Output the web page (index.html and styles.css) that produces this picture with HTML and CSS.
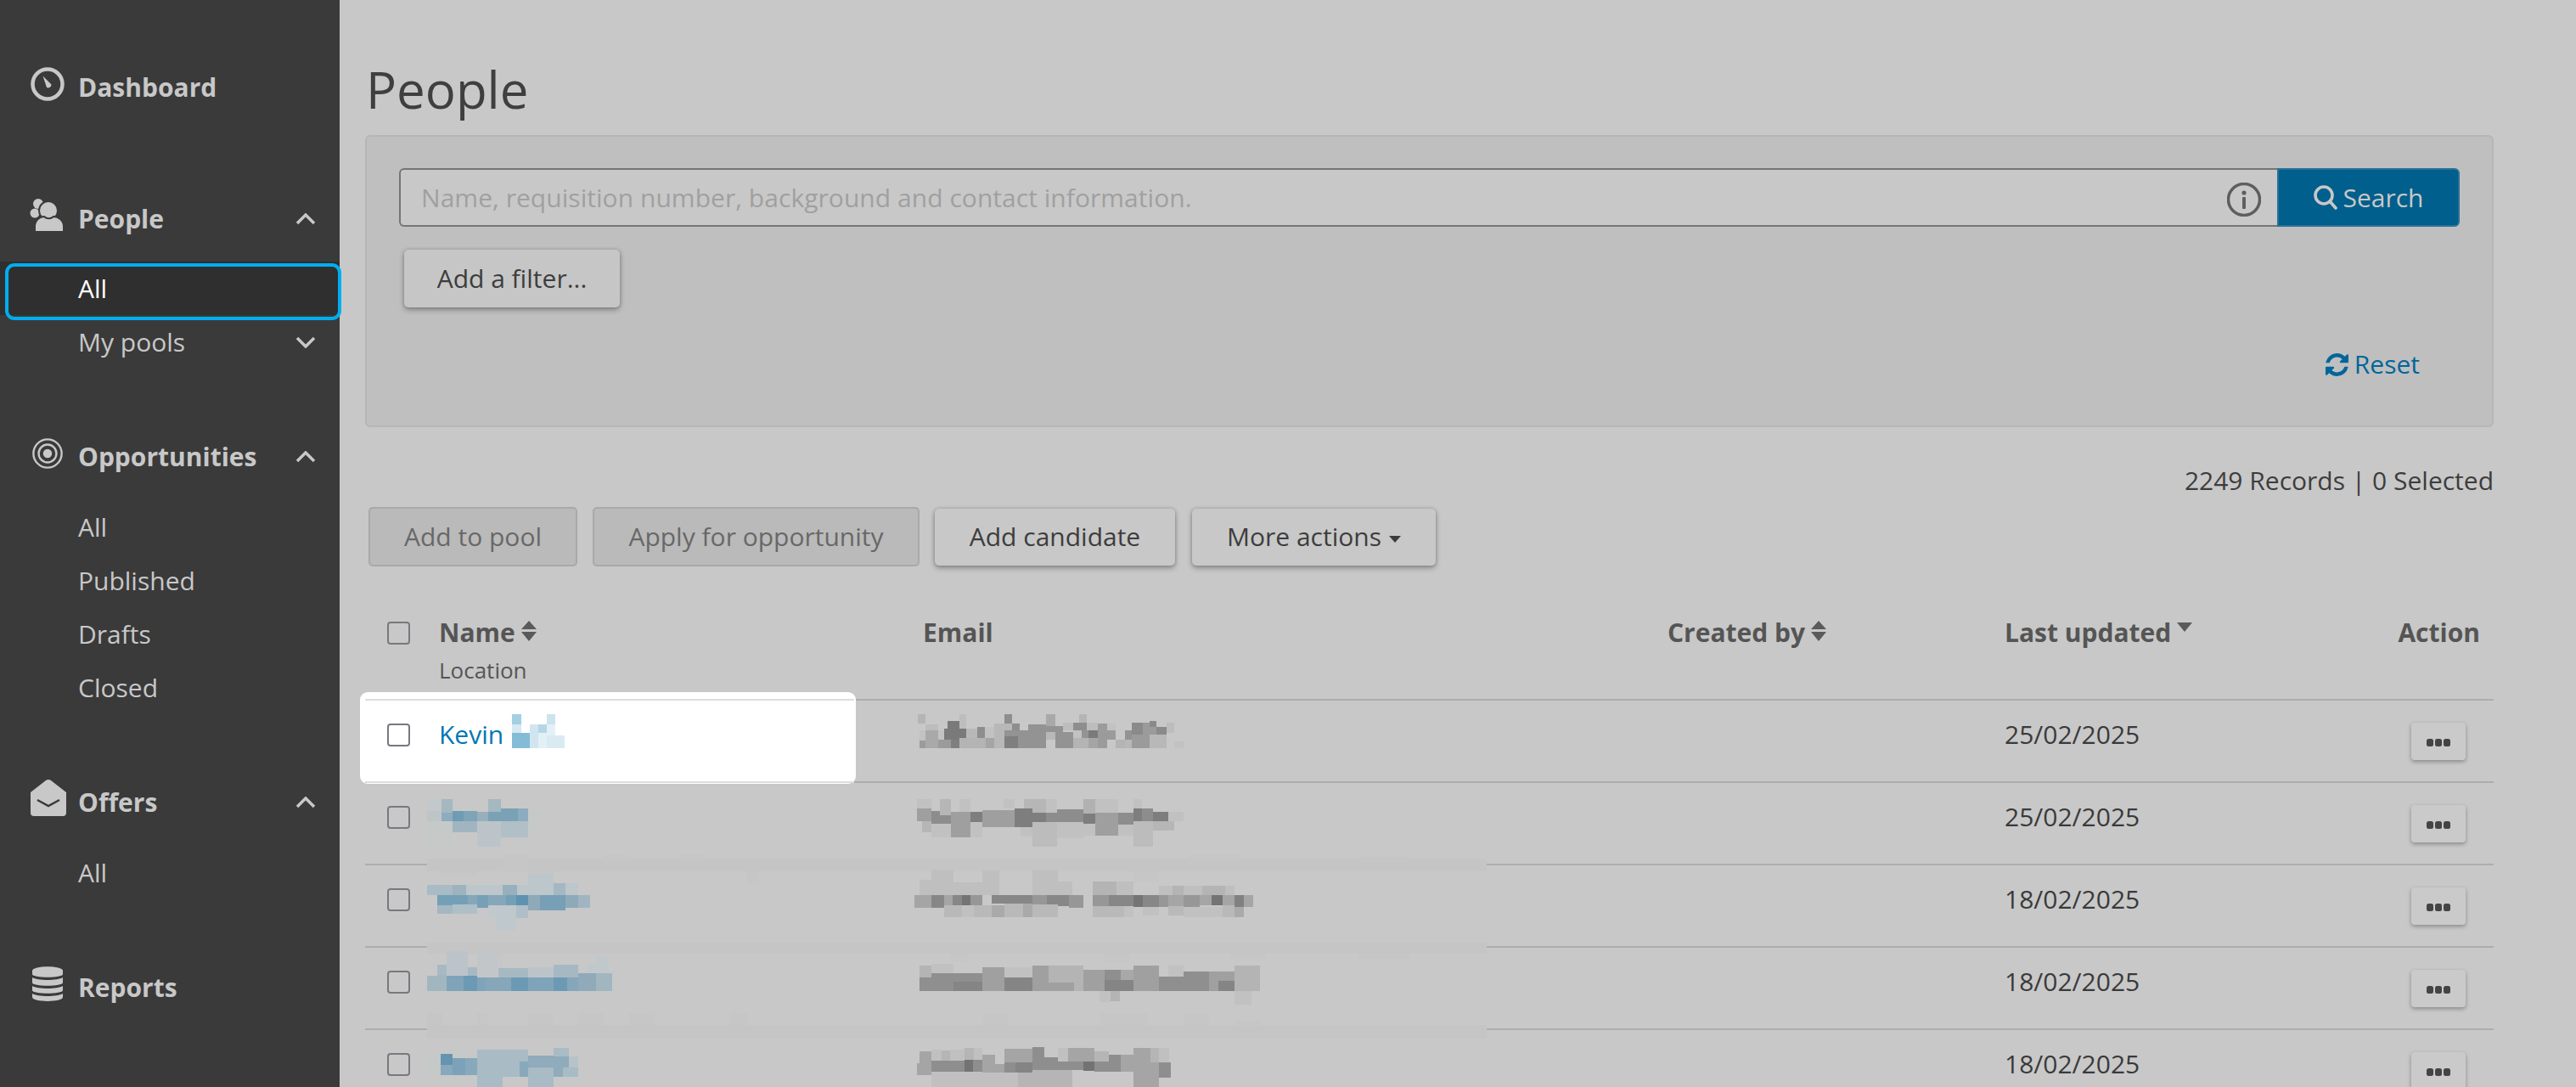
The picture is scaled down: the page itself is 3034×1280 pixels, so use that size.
FILE: index.html
```html
<!DOCTYPE html>
<html lang="en">
<head>
<meta charset="utf-8">
<title>People</title>
<link rel="stylesheet" href="styles.css">
</head>
<body>
<div class="app">
  <nav class="sidebar">
    <section class="group group-solo">
      <a class="head">
        <svg class="icon icon-dash" viewBox="0 0 40 40"><circle cx="20" cy="20" r="17.500" fill="none" stroke="currentColor" stroke-width="4.500"/><path fill="currentColor" d="M14.500 10.500 L24.500 20.500 A3.800 3.800 0 0 1 19 24 Z"/></svg>
        <span class="label">Dashboard</span>
      </a>
    </section>
    <section class="group">
      <a class="head">
        <svg class="icon icon-people" viewBox="0 0 40 44"><circle cx="10" cy="9" r="6" fill="currentColor"/><circle cx="6" cy="20" r="5.500" fill="currentColor"/><circle cx="22" cy="17" r="11" fill="currentColor" stroke="#3a3a3a" stroke-width="2"/><path fill="currentColor" stroke="#3a3a3a" stroke-width="2" d="M6 42 V36 C6 28 12 24 17 24 C20 27 25 27 28 24 C34 24 40 29 40 36 V42 Z"/></svg>
        <span class="label">People</span>
        <svg class="chevron" viewBox="0 0 24 14"><path d="M2 12 L12 2 L22 12"/></svg>
      </a>
      <a class="sub active">All</a>
      <a class="sub">My pools<svg class="chevron" viewBox="0 0 24 14"><path d="M2 2 L12 12 L22 2"/></svg></a>
    </section>
    <section class="group">
      <a class="head">
        <svg class="icon icon-target" viewBox="0 0 40 40"><circle cx="20" cy="20" r="17.500" fill="none" stroke="currentColor" stroke-width="2.500"/><circle cx="20" cy="20" r="11" fill="none" stroke="currentColor" stroke-width="2.500"/><circle cx="20" cy="20" r="5.500" fill="currentColor"/></svg>
        <span class="label">Opportunities</span>
        <svg class="chevron" viewBox="0 0 24 14"><path d="M2 12 L12 2 L22 12"/></svg>
      </a>
      <a class="sub">All</a>
      <a class="sub">Published</a>
      <a class="sub">Drafts</a>
      <a class="sub">Closed</a>
    </section>
    <section class="group">
      <a class="head">
        <svg class="icon icon-offer" viewBox="0 0 42 43"><path fill="currentColor" d="M21 0 Q22.500 0 24 1 L42 15 V39 Q42 43 38 43 H4 Q0 43 0 39 V15 L18 1 Q19.500 0 21 0 Z"/><path fill="none" stroke="#3a3a3a" stroke-width="2.500" d="M8 24 L21 31 L34 24"/></svg>
        <span class="label">Offers</span>
        <svg class="chevron" viewBox="0 0 24 14"><path d="M2 12 L12 2 L22 12"/></svg>
      </a>
      <a class="sub">All</a>
    </section>
    <section class="group">
      <a class="head">
        <svg class="icon icon-db" viewBox="0 0 36 41"><path fill="currentColor" d="M0 5 C0 -1.500 36 -1.500 36 5 V9 C36 14 0 14 0 9 Z"/><path fill="currentColor" d="M0 13 C6 17 30 17 36 13 V19 C36 24 0 24 0 19 Z"/><path fill="currentColor" d="M0 23 C6 27 30 27 36 23 V28 C36 33 0 33 0 28 Z"/><path fill="currentColor" d="M0 32 C6 36 30 36 36 32 V36 C36 42.500 0 42.500 0 36 Z"/></svg>
        <span class="label">Reports</span>
      </a>
    </section>
  </nav>

  <main class="main">
    <h1 class="title">People</h1>

    <section class="panel">
      <div class="search-row">
        <div class="search-field">
          <input class="search-input" type="text" placeholder="Name, requisition number, background and contact information.">
          <svg class="info" viewBox="0 0 40 40"><circle cx="20" cy="20" r="18.500" fill="none" stroke="currentColor" stroke-width="3.500"/><circle cx="20" cy="12" r="2.600" fill="currentColor"/><rect x="18" y="17" width="4" height="14" rx="1" fill="currentColor"/></svg>
        </div>
        <button class="search-btn" type="button">
          <svg class="search-icon" viewBox="0 0 28 30"><circle cx="12" cy="12" r="10" fill="none" stroke="currentColor" stroke-width="3.600"/><path d="M19 19 L26 27" stroke="currentColor" stroke-width="3.600" stroke-linecap="round"/></svg>
          Search
        </button>
      </div>
      <button class="btn btn-raised filter-btn" type="button">Add a filter...</button>
      <a class="reset">
        <svg class="reset-icon" viewBox="0 0 1536 1536"><path fill="currentColor" d="M1511 928q0 5-1 7-64 268-268 434.500t-478 166.500q-146 0-282.500-55t-243.500-157l-129 129q-19 19-45 19t-45-19-19-45v-448q0-26 19-45t45-19h448q26 0 45 19t19 45-19 45l-137 137q71 66 161 102t187 36q134 0 250-65t186-179q11-17 53-117 8-23 30-23h192q13 0 22.500 9.500t9.500 22.500zm25-800v448q0 26-19 45t-45 19h-448q-26 0-45-19t-19-45 19-45l138-138q-148-137-349-137-134 0-250 65t-186 179q-11 17-53 117-8 23-30 23h-199q-13 0-22.500-9.500t-9.500-22.500v-7q65-268 270-434.500t480-166.500q146 0 284 55.500t245 156.500l130-129q19-19 45-19t45 19 19 45z"/></svg>
        Reset
      </a>
    </section>

    <p class="records">2249 Records | 0 Selected</p>

    <div class="actions">
      <button class="btn btn-disabled btn-pool" type="button">Add to pool</button>
      <button class="btn btn-disabled btn-apply" type="button">Apply for opportunity</button>
      <button class="btn btn-raised btn-add" type="button">Add candidate</button>
      <button class="btn btn-raised btn-more" type="button">More actions<span class="caret"></span></button>
    </div>

    <div class="table">
      <div class="row head-row">
        <div class="cell cell-check"><input class="check" type="checkbox"></div>
        <div class="cell">
          <div class="th">Name<svg class="sort" viewBox="0 0 18 24"><path d="M9 0 L18 10 H0 Z M0 13 H18 L9 24 Z"/></svg></div>
          <div class="th-sub">Location</div>
        </div>
        <div class="cell"><div class="th">Email</div></div>
        <div class="cell"><div class="th">Created by<svg class="sort" viewBox="0 0 18 24"><path d="M9 0 L18 10 H0 Z M0 13 H18 L9 24 Z"/></svg></div></div>
        <div class="cell"><div class="th">Last updated<svg class="sort-down" viewBox="0 0 18 11"><path d="M0 0 H18 L9 11 Z"/></svg></div></div>
        <div class="cell cell-action"><div class="th">Action</div></div>
      </div>

      <div class="row data-row">
        <div class="spotlight"></div>
        <div class="cell cell-check"><input class="check" type="checkbox"></div>
        <div class="cell"><a class="person">Kevin</a></div>
        <div class="cell"></div>
        <div class="cell"></div>
        <div class="cell date">25/02/2025</div>
        <div class="cell cell-action"><button class="dots" type="button"><svg viewBox="0 0 28 9"><rect width="8" height="9" rx="2.500"/><rect x="10" width="8" height="9" rx="2.500"/><rect x="20" width="8" height="9" rx="2.500"/></svg></button></div>
      </div>
      <div class="row data-row">
        <div class="cell cell-check"><input class="check" type="checkbox"></div>
        <div class="cell"></div>
        <div class="cell"></div>
        <div class="cell"></div>
        <div class="cell date">25/02/2025</div>
        <div class="cell cell-action"><button class="dots" type="button"><svg viewBox="0 0 28 9"><rect width="8" height="9" rx="2.500"/><rect x="10" width="8" height="9" rx="2.500"/><rect x="20" width="8" height="9" rx="2.500"/></svg></button></div>
      </div>
      <div class="row data-row">
        <div class="cell cell-check"><input class="check" type="checkbox"></div>
        <div class="cell"></div>
        <div class="cell"></div>
        <div class="cell"></div>
        <div class="cell date">18/02/2025</div>
        <div class="cell cell-action"><button class="dots" type="button"><svg viewBox="0 0 28 9"><rect width="8" height="9" rx="2.500"/><rect x="10" width="8" height="9" rx="2.500"/><rect x="20" width="8" height="9" rx="2.500"/></svg></button></div>
      </div>
      <div class="row data-row">
        <div class="cell cell-check"><input class="check" type="checkbox"></div>
        <div class="cell"></div>
        <div class="cell"></div>
        <div class="cell"></div>
        <div class="cell date">18/02/2025</div>
        <div class="cell cell-action"><button class="dots" type="button"><svg viewBox="0 0 28 9"><rect width="8" height="9" rx="2.500"/><rect x="10" width="8" height="9" rx="2.500"/><rect x="20" width="8" height="9" rx="2.500"/></svg></button></div>
      </div>
      <div class="row data-row">
        <div class="cell cell-check"><input class="check" type="checkbox"></div>
        <div class="cell"></div>
        <div class="cell"></div>
        <div class="cell"></div>
        <div class="cell date">18/02/2025</div>
        <div class="cell cell-action"><button class="dots" type="button"><svg viewBox="0 0 28 9"><rect width="8" height="9" rx="2.500"/><rect x="10" width="8" height="9" rx="2.500"/><rect x="20" width="8" height="9" rx="2.500"/></svg></button></div>
      </div>

      <svg class="redactions" viewBox="430 715 1400 565" aria-hidden="true">
        <g fill="#c5c5c5">
          <path d="M503 1011h1248v15h-1248z"/>
          <path d="M503 1110h1248v13h-1248z"/>
          <path d="M503 1207h1248v16h-1248z"/>
        </g>
        <g fill="#c6c6c6">
          <path d="M520 1026h42v5h-42zM592 1007h30v18h-30zM622 1026h30v12h-30zM711 1007h30v6h-30zM800 1007h30v6h-30zM880 1026h14v14h-14zM1097 1026h20v20h-20zM1157 1026h20v20h-20zM1216 1026h30v16h-30zM1335 1026h30v12h-30zM1400 1007h60v6h-60zM1600 1009h60v6h-60z"/>
          <path d="M503 1193h18v14h-18zM562 1193h12v14h-12zM622 1193h30v14h-30zM681 1193h30v14h-30zM741 1193h30v14h-30zM860 1193h21v14h-21zM1157 1193h30v14h-30zM1295 1193h57v14h-57zM1394 1193h30v14h-30zM1455 1202h30v6h-30z"/>
          <path d="M562 1123h30v20h-30zM1120 1123h20v10h-20zM1300 1123h30v10h-30zM1450 1123h40v8h-40zM1600 1123h60v6h-60z"/>
        </g>

        <!-- row 1 -->
        <path fill="#a3cfe3" d="M603 841h11v12h-11z"/>
        <path fill="#d6e8f1" d="M603 853h11v10h-11z"/>
        <path fill="#84bcd8" d="M603 863h21v18h-21z"/>
        <path fill="#d0e5ef" d="M624 853h10v28h-10z"/>
        <path fill="#b5d6e7" d="M634 853h10v10h-10z"/>
        <path fill="#e3f0f6" d="M634 863h10v18h-10zM644 853h10v13h-10z"/>
        <path fill="#cde3ee" d="M644 841h10v12h-10z"/>
        <path fill="#daeaf2" d="M644 866h21v15h-21z"/>

        <g transform="translate(1060 820) scale(.33333)">
          <path fill="#b5b5b5" d="M63 63h27v33h-27zM633 63h27v30h-27z"/>
          <path fill="#bdbdbd" d="M90 99h45v21h-45zM210 63h24v51h-24zM576 93h36v27h-36zM942 93h27v36h-27zM660 93h39v27h-39z"/>
          <path fill="#7a7a7a" d="M168 87h42v27h-42zM156 114h78v39h-78zM666 120h33v27h-33z"/>
          <path fill="#8e8e8e" d="M369 63h27v33h-27zM273 108h27v39h-27zM396 96h27v24h-27zM612 93h48v27h-48z"/>
          <path fill="#a9a9a9" d="M516 63h33v42h-33zM90 120h45v33h-45zM90 153h45v30h-45z"/>
          <path fill="#c2c2c2" d="M69 120h21v36h-21zM135 120h21v33h-21zM300 108h33v39h-33zM612 120h30v27h-30zM732 96h30v24h-30zM969 159h36v24h-36z"/>
          <path fill="#b8b8b8" d="M234 114h39v33h-39zM333 96h36v87h-36zM369 96h27v24h-27zM516 126h33v27h-33zM795 153h24v30h-24zM882 135h60v48h-60z"/>
          <path fill="#939393" d="M369 120h48v21h-48zM417 120h36v63h-36zM453 99h63v84h-63zM516 105h60v21h-60zM549 126h63v57h-63zM642 120h24v27h-24zM795 120h24v33h-24z"/>
          <path fill="#9b9b9b" d="M699 96h33v87h-33zM732 120h30v33h-30zM819 135h63v48h-63zM858 93h24v42h-24zM882 108h24v27h-24zM135 153h45v30h-45zM69 156h21v27h-21z"/>
          <path fill="#8a8a8a" d="M819 93h39v42h-39zM882 87h24v21h-24zM906 108h36v27h-36z"/>
          <path fill="#7f7f7f" d="M180 153h30v30h-30zM369 141h48v42h-48z"/>
          <path fill="#b4b4b4" d="M210 147h93v36h-93zM612 147h54v36h-54zM762 153h33v30h-33z"/>
          <path fill="#a5a5a5" d="M303 147h30v36h-30zM666 147h33v36h-33z"/>
        </g>

        <g transform="translate(490 930) scale(.33333)">
          <!-- row 2 name -->
          <path fill="#c2c8cb" d="M39 33h51v42h-51z"/>
          <path fill="#a4b8bf" d="M90 33h39v48h-39zM255 33h45v45h-45z"/>
          <path fill="#bdc5c8" d="M39 75h51v36h-51z"/>
          <path fill="#8cacbf" d="M90 81h39v30h-39zM360 66h36v45h-36z"/>
          <path fill="#6e9cb3" d="M129 75h39v36h-39z"/>
          <path fill="#7fa3b7" d="M168 75h48v36h-48z"/>
          <path fill="#97aebb" d="M216 78h39v33h-39z"/>
          <path fill="#7ba1b5" d="M255 78h45v33h-45zM300 66h60v45h-60z"/>
          <path fill="#c5c9c8" d="M396 75h42v75h-42zM39 111h90v90h-90z"/>
          <path fill="#a0b5c0" d="M129 111h87v39h-87z"/>
          <path fill="#bcc4ca" d="M216 111h84v90h-84z"/>
          <path fill="#b1bfc6" d="M300 111h96v57h-96z"/>
          <!-- row 3 name -->
          <path fill="#a9bbc4" d="M39 336h90v36h-90z"/>
          <path fill="#9db3be" d="M129 336h48v36h-48z"/>
          <path fill="#bcc6cb" d="M177 336h129v36h-129zM357 336h39v36h-39zM396 296h90v76h-90zM528 330h45v42h-45z"/>
          <path fill="#98b0bd" d="M306 336h51v36h-51z"/>
          <path fill="#a4b7c2" d="M486 330h42v42h-42zM75 408h54v30h-54z"/>
          <path fill="#73a0b7" d="M75 372h108v36h-108zM318 372h36v36h-36z"/>
          <path fill="#86a7ba" d="M183 372h33v36h-33zM255 372h63v36h-63z"/>
          <path fill="#77a0b7" d="M216 372h39v45h-39zM438 372h90v54h-90z"/>
          <path fill="#5f92b0" d="M354 372h42v36h-42z"/>
          <path fill="#8ea9b8" d="M396 372h42v54h-42zM528 372h45v45h-45z"/>
          <path fill="#a0b5c1" d="M573 372h42v45h-42z"/>
          <path fill="#afbfc7" d="M129 405h87v33h-87zM354 408h42v45h-42z"/>
          <path fill="#c2c9cc" d="M255 408h30v38h-30z"/>
          <path fill="#bfc8cc" d="M285 408h69v90h-69z"/>
          <!-- row 4 name -->
          <path fill="#bcc4c9" d="M108 570h75v87h-75zM396 627h90v36h-90z"/>
          <path fill="#a6b9c3" d="M75 618h33v39h-33zM183 627h33v30h-33zM291 630h105v33h-105zM486 618h87v45h-87z"/>
          <path fill="#c3c6c8" d="M216 570h75v93h-75z"/>
          <path fill="#c1c8cc" d="M603 615h33v33h-33zM636 585h45v63h-45z"/>
          <path fill="#a2b6c0" d="M39 657h69v54h-69zM636 648h57v63h-57z"/>
          <path fill="#7fa4b9" d="M108 657h60v54h-60zM216 663h30v48h-30zM396 663h90v48h-90z"/>
          <path fill="#6c9ab4" d="M168 657h48v54h-48zM336 663h60v48h-60zM486 663h48v48h-48z"/>
          <path fill="#86a6ba" d="M246 663h90v48h-90zM534 663h39v48h-39z"/>
          <path fill="#90aaba" d="M573 648h63v63h-63z"/>
          <!-- row 5 name -->
          <path fill="#c5c9c8" d="M39 933h48v75h-48zM129 909h45v39h-45z"/>
          <path fill="#6594b0" d="M87 933h42v39h-42z"/>
          <path fill="#7ba2b9" d="M129 948h45v60h-45z"/>
          <path fill="#88a8bc" d="M174 948h42v60h-42zM87 972h42v36h-42zM366 960h30v54h-30z"/>
          <path fill="#a9bbc4" d="M216 918h180v42h-180zM216 960h150v54h-150zM396 981h90v69h-90zM216 1014h90v36h-90zM486 912h54v30h-54zM519 981h54v33h-54z"/>
          <path fill="#8fabbc" d="M396 939h90v42h-90zM486 942h54v39h-54zM486 981h33v33h-33z"/>
          <path fill="#b7c3c8" d="M540 942h33v39h-33z"/>
        </g>

        <g transform="translate(1060 930) scale(.33333)">
          <!-- row 2 email -->
          <path fill="#c1c1c1" d="M60 33h51v33h-51zM210 33h39v45h-39zM366 33h39v33h-39zM516 33h39v48h-39zM690 33h81v48h-81zM825 33h30v33h-30zM111 120h69v48h-69zM249 114h42v54h-42zM426 132h42v33h-42zM555 114h93v57h-93zM648 120h42v42h-42zM771 123h54v39h-54zM948 78h54v33h-54z"/>
          <path fill="#b6b6b6" d="M141 33h39v57h-39zM438 33h78v48h-78zM78 111h33v39h-33zM894 111h75v33h-75z"/>
          <path fill="#b1b1b1" d="M648 33h42v51h-42z"/>
          <path fill="#9f9f9f" d="M60 66h51v45h-51zM180 78h69v90h-69zM291 72h114v60h-114zM690 81h81v81h-81z"/>
          <path fill="#8d8d8d" d="M111 75h30v45h-30zM141 90h39v30h-39zM516 81h39v33h-39zM555 69h93v45h-93zM771 81h54v42h-54zM855 66h39v45h-39z"/>
          <path fill="#7e7e7e" d="M249 78h42v36h-42zM405 66h63v66h-63zM468 81h48v33h-48zM648 84h42v36h-42zM825 66h30v45h-30zM894 78h54v33h-54z"/>
          <path fill="#bcbcbc" d="M468 114h87v87h-87zM825 111h69v90h-69z"/>
          <!-- row 3 email -->
          <path fill="#bfbfbf" d="M111 282h78v90h-78zM69 318h42v54h-42zM189 327h63v45h-63zM252 327h39v45h-39zM291 285h60v87h-60zM468 282h90v90h-90zM558 324h51v48h-51zM765 324h60v48h-60zM915 339h48v33h-48zM1002 339h66v33h-66zM1149 339h33v33h-33z"/>
          <path fill="#b4b4b4" d="M681 324h84v48h-84zM963 339h39v33h-39zM1068 339h81v33h-81z"/>
          <path fill="#a5a5a5" d="M51 372h60v45h-60zM156 372h30v45h-30zM948 372h54v42h-54zM1059 372h42v36h-42zM1140 372h42v36h-42zM1215 372h33v42h-33z"/>
          <path fill="#878787" d="M111 372h45v45h-45zM186 372h33v45h-33zM324 372h144v30h-144zM519 372h78v40h-78zM738 372h87v39h-87zM858 372h57v42h-57z"/>
          <path fill="#747474" d="M219 372h30v45h-30zM825 372h33v42h-33zM1101 372h39v36h-39z"/>
          <path fill="#979797" d="M249 372h42v45h-42zM468 372h51v33h-51zM597 372h51v45h-51zM681 372h57v39h-57zM915 372h33v42h-33zM1002 372h57v42h-57z"/>
          <path fill="#818181" d="M1182 372h33v42h-33z"/>
          <path fill="#b9b9b9" d="M156 408h63v42h-63zM261 408h63v42h-63zM369 402h66v48h-66zM468 405h90v45h-90zM681 411h111v39h-111zM948 411h54v33h-54zM1140 408h42v42h-42z"/>
          <path fill="#c1c1c1" d="M219 408h42v42h-42zM792 411h33v39h-33zM858 414h57v30h-57zM1002 414h138v36h-138z"/>
          <path fill="#aaaaaa" d="M324 408h45v42h-45zM435 402h33v48h-33zM1182 414h33v36h-33z"/>
          <!-- row 4 email -->
          <path fill="#b4b4b4" d="M69 621h42v42h-42zM525 621h36v60h-36zM561 621h87v60h-87zM1182 621h90v90h-90zM744 711h33v36h-33zM615 681h33v30h-33z"/>
          <path fill="#c1c1c1" d="M111 615h78v33h-78zM369 627h99v36h-99zM948 621h54v39h-54zM705 711h39v39h-39zM1182 711h60v48h-60z"/>
          <path fill="#a0a0a0" d="M291 627h78v84h-78zM468 621h57v90h-57zM825 621h90v90h-90zM648 636h75v75h-75zM525 681h90v30h-90zM1092 642h90v33h-90zM1092 675h33v36h-33z"/>
          <path fill="#8f8f8f" d="M111 648h78v63h-78zM189 648h102v30h-102zM723 636h57v36h-57zM915 660h87v51h-87zM1002 642h90v69h-90zM69 663h42v48h-42z"/>
          <path fill="#a8a8a8" d="M780 636h45v36h-45z"/>
          <path fill="#858585" d="M189 678h102v33h-102zM369 663h99v48h-99zM723 672h102v39h-102zM1125 675h57v36h-57z"/>
          <!-- row 5 email -->
          <path fill="#c0c0c0" d="M111 996h306v54h-306zM111 918h36v39h-36zM177 918h51v39h-51zM261 912h30v45h-30zM558 912h36v48h-36zM915 912h36v51h-36z"/>
          <path fill="#b5b5b5" d="M147 921h30v36h-30zM228 912h33v45h-33zM417 999h51v51h-51zM468 990h141v60h-141zM687 924h51v36h-51zM885 912h30v51h-30z"/>
          <path fill="#a5a5a5" d="M69 924h42v42h-42zM60 966h51v42h-51zM369 915h99v48h-99zM291 936h45v63h-45zM336 969h33v30h-33zM594 912h93v48h-93zM780 936h45v60h-45zM825 912h60v51h-60zM825 963h90v87h-90z"/>
          <path fill="#8e8e8e" d="M111 957h117v39h-117zM258 954h33v42h-33zM369 963h39v36h-39zM468 909h42v81h-42zM510 945h48v45h-48zM558 960h90v30h-90zM687 960h93v36h-93zM738 936h42v24h-42zM915 963h42v54h-42z"/>
          <path fill="#737373" d="M228 954h30v42h-30zM648 960h39v33h-39z"/>
          <path fill="#848484" d="M408 963h60v36h-60z"/>
        </g>
      </svg>
    </div>
  </main>
</div>
</body>
</html>
```

FILE: styles.css
```css
* { box-sizing: border-box; }
html, body { margin: 0; height: 100%; overflow: hidden; }
body { font-family: "Open Sans", "Noto Sans", sans-serif; font-size: 30px; line-height: 40px; color: #3d3d3d; background: #c8c8c8; }
.app { display: flex; height: 1280px; overflow: hidden; }

/* Sidebar */
.sidebar { flex: 0 0 400px; height: 100%; padding-top: 71px; background: #3a3a3a; color: #c8c8c8; }
.group { margin-bottom: 72px; }
.group-solo { padding-bottom: 20px; }
.head { display: flex; align-items: center; height: 63px; margin-bottom: 20px; padding: 0 28px 0 36px; font-weight: 700; }
.group-solo .head { margin-bottom: 0; }
.group-solo + .group .head { margin-bottom: 19px; }
.label { margin-left: 16px; }
.icon { flex: 0 0 auto; display: block; }
.icon-dash { width: 40px; height: 40px; margin-top: -8px; }
.icon-people { width: 40px; height: 44px; margin-top: -10px; margin-left: -1px; margin-right: 1px; }
.icon-target { width: 38px; height: 38px; margin: -8px 1px 0 1px; }
.icon-offer { width: 42px; height: 43px; margin: -10px -2px 0 0; }
.icon-db { width: 36px; height: 41px; margin: -8px 2px 0 2px; }
.chevron { width: 24px; height: 14px; margin-left: auto; fill: none; stroke: currentColor; stroke-width: 3.500; }
.sub { position: relative; display: flex; align-items: center; height: 63px; padding: 0 28px 0 92px; }
.sub.active { color: #fff; background: #2f2f2f; }
.sub.active::after { content: ""; position: absolute; top: 2px; right: -2px; bottom: -6px; left: 6px; border: 4px solid #00aeef; border-radius: 11px; }

/* Main */
.main { flex: 1 1 auto; min-width: 0; padding: 0 97px 0 30px; }
.title { margin: 63px 0 12px 1px; font-size: 60px; font-weight: 400; line-height: 84px; color: #3f3f3f; }

.panel { display: flex; flex-direction: column; align-items: flex-start; height: 344px; padding: 37px 38px 0; background: #bfbfbf; border: 2px solid #b6b6b6; border-radius: 6px; }
.search-row { display: flex; width: 100%; height: 69px; }
.search-field { position: relative; flex: 1 1 auto; }
.search-input { width: 100%; height: 100%; padding: 0 80px 0 24px; font: inherit; letter-spacing: .04px; color: #3d3d3d; background: #c8c8c8; border: 2px solid #757575; border-right: 0; border-radius: 6px 0 0 6px; outline: 0; }
.search-input::placeholder { color: #a0a0a0; opacity: 1; }
.info { position: absolute; top: 17px; right: 19px; width: 40px; height: 40px; color: #5e5e5e; }
.search-btn { display: flex; align-items: center; justify-content: center; flex: 0 0 215px; padding: 0; font: inherit; color: #c8c8c8; background: #005f8c; border: 2px solid #2a7099; border-radius: 0 6px 6px 0; }
.search-icon { width: 28px; height: 30px; margin-right: 7px; }

.btn { height: 70px; padding: 0; font: inherit; border-radius: 5px; white-space: nowrap; }
.btn-raised { height: 67px; color: #3d3d3d; background: #c8c8c8; border: 0; box-shadow: 0 3px 6px rgba(0, 0, 0, .3), 0 0 4px rgba(0, 0, 0, .18); }
.btn-disabled { color: #686868; background: #bababa; border: 2px solid #a9a9a9; }
.filter-btn { width: 254px; height: 68px; margin: 27px 0 0 6px; background: #c6c6c6; }
.reset { display: flex; align-items: center; align-self: flex-end; margin-top: auto; margin-bottom: 52px; margin-right: 47px; color: #00669a; }
.reset-icon { width: 27px; height: 27px; margin-right: 7px; }

.records { margin: 43px 0 11px; text-align: right; color: #3d3d3d; }

.actions { display: flex; align-items: center; gap: 18px; height: 70px; padding-left: 4px; }
.btn-pool { width: 246px; }
.btn-apply { width: 385px; }
.btn-add { width: 283px; margin-right: 2px; }
.btn-more { width: 287px; }
.caret { display: inline-block; width: 0; height: 0; margin-left: 9px; vertical-align: middle; border: 7px solid transparent; border-top: 8px solid #3d3d3d; border-bottom: 0; }

/* Table */
.table { position: relative; margin-top: 48px; }
.row { position: relative; display: grid; grid-template-columns: 87px 570px 877px 397px 376px 1fr; }
.cell { position: relative; z-index: 1; min-width: 0; }
.cell-check { padding-left: 26px; }
.head-row { height: 110px; padding-top: 10px; border-bottom: 2px solid #adadad; }
.data-row { height: 97px; padding-top: 20px; border-bottom: 2px solid #adadad; color: #3a3a3a; }
.th { display: flex; align-items: center; font-weight: 700; color: #555; white-space: nowrap; }
.th-sub { margin-top: 4px; font-size: 26px; color: #555; }
.sort { width: 18px; height: 24px; margin: -4px 0 0 7px; fill: #5a5a5a; }
.sort-down { width: 18px; height: 11px; margin: -14px 0 0 7px; fill: #5a5a5a; }
.cell-action { display: flex; align-items: flex-start; justify-content: flex-end; padding-right: 16px; }
.check { display: block; width: 27px; height: 27px; margin: 0; appearance: none; background: transparent; border: 2px solid #787880; border-radius: 4px; }
.head-row .check { margin-top: 7px; }
.data-row .check { margin-top: 7px; }
.person { color: #0077b3; }
.dots { display: flex; align-items: center; justify-content: center; width: 64px; height: 44px; margin: 6px 17px 0 0; padding: 2px 0 0; background: #cacaca; border: 0; border-radius: 4px; box-shadow: 0 2px 5px rgba(0, 0, 0, .32); }
.dots svg { width: 28px; height: 9px; fill: #444; }

/* Cut-out around the first row */
.spotlight { position: absolute; top: -10px; left: -6px; width: 584px; height: 108px; background: #fff; border-radius: 9px; }
.spotlight::before, .spotlight::after { content: ""; position: absolute; left: 6px; right: 2px; height: 2px; background: #ddd; }
.spotlight::before { top: 8px; }
.spotlight::after { bottom: 1px; }

.redactions { position: absolute; top: 0; left: 0; z-index: 2; width: 1400px; height: 565px; shape-rendering: crispEdges; pointer-events: none; }
```
